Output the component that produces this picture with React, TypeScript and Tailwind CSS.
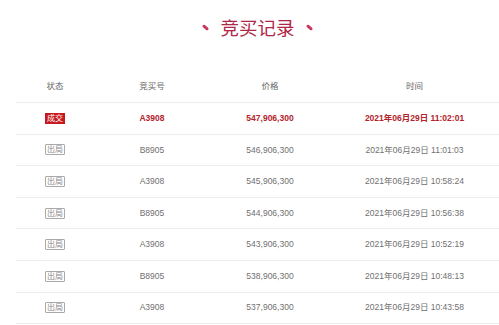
import React from 'react';

type Row = {
  status: 'win' | 'out';
  code: string;
  price: string;
  time: string;
};

const rows: Row[] = [
  { status: 'win', code: 'A3908', price: '547,906,300', time: '2021年06月29日 11:02:01' },
  { status: 'out', code: 'B8905', price: '546,906,300', time: '2021年06月29日 11:01:03' },
  { status: 'out', code: 'A3908', price: '545,906,300', time: '2021年06月29日 10:58:24' },
  { status: 'out', code: 'B8905', price: '544,906,300', time: '2021年06月29日 10:56:38' },
  { status: 'out', code: 'A3908', price: '543,906,300', time: '2021年06月29日 10:52:19' },
  { status: 'out', code: 'B8905', price: '538,906,300', time: '2021年06月29日 10:48:13' },
  { status: 'out', code: 'A3908', price: '537,906,300', time: '2021年06月29日 10:43:58' },
];

const cols = 'grid grid-cols-[78px_116px_120px_1fr] items-center text-center';

function Dash() {
  return <span className="block w-[7px] h-[3px] rounded-full bg-[#c9375c] rotate-[40deg]" />;
}

function StatusTag({ status }: { status: Row['status'] }) {
  if (status === 'win') {
    return (
      <span className="inline-block px-[2px] h-[11px] leading-[11px] text-[8px] font-normal text-white bg-[#c8191f]">
        成交
      </span>
    );
  }
  return (
    <span className="inline-block px-[1px] h-[11px] leading-[9px] text-[8px] text-[#888] border border-[#aaa] rounded-[1px]">
      出局
    </span>
  );
}

export default function App() {
  return (
    <div
      className="w-[499px] h-[325px] bg-white overflow-hidden"
      style={{ fontFamily: '"Liberation Sans", "Noto Sans CJK SC", sans-serif' }}
    >
      {/* Title */}
      <div className="h-[70px] flex items-start justify-center pt-[14px]">
        <div className="flex items-center gap-[11px] ml-[16px]">
          <Dash />
          <span
            className="text-[18.5px] leading-[26px] text-[#b02646]"
            style={{ fontFamily: '"Noto Sans CJK SC", sans-serif' }}
          >
            竞买记录
          </span>
          <Dash />
        </div>
      </div>

      {/* Table */}
      <div className="ml-[16px]">
        <div className={`${cols} h-[33px] border-b border-[#ececec] text-[8.5px] text-[#666]`}>
          <span>状态</span>
          <span>竞买号</span>
          <span>价格</span>
          <span>时间</span>
        </div>
        {rows.map((r, i) => {
          const win = r.status === 'win';
          return (
            <div
              key={i}
              className={`${cols} h-[31.6px] border-b border-[#ececec] text-[8.5px] ${
                win ? 'text-[#b3232a] font-bold' : 'text-[#707070]'
              }`}
            >
              <span className="flex justify-center">
                <StatusTag status={r.status} />
              </span>
              <span>{r.code}</span>
              <span>{r.price}</span>
              <span>{r.time}</span>
            </div>
          );
        })}
      </div>
    </div>
  );
}
